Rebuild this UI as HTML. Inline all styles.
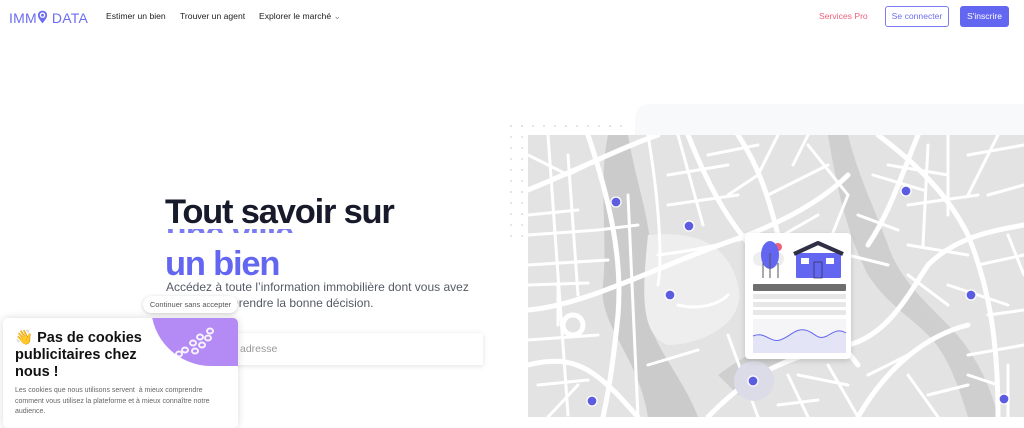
<!DOCTYPE html>
<html><head><meta charset="utf-8"><style>
*{margin:0;padding:0;box-sizing:border-box}
body{width:1024px;height:417px;overflow:hidden;background:#fff;font-family:"Liberation Sans",sans-serif;position:relative}
.abs{position:absolute}
.nav a{position:absolute;top:11px;font-size:8.6px;color:#222;white-space:nowrap}
</style></head><body>
<div class="abs" style="left:9px;top:7px;font-size:14px;color:#6c6cf0;letter-spacing:0.2px">IMM<span style="display:inline-block;width:11px;height:13px;position:relative;top:2px"><svg width="11" height="16" viewBox="0 0 12 16"><path d="M6 15 C3 11 1 9 1 6 A5 5 0 0 1 11 6 C11 9 9 11 6 15Z" fill="#6c6cf0"/><circle cx="6" cy="6" r="3" fill="#fff"/><circle cx="6" cy="6" r="1.6" fill="#6c6cf0"/></svg></span> DATA</div>
<div class="nav">
<a style="left:106px">Estimer un bien</a>
<a style="left:180px">Trouver un agent</a>
<a style="left:259px">Explorer le marché <span style="color:#888;font-size:9px">&#8964;</span></a>
<a style="left:819px;color:#f0607a">Services Pro</a>
</div>
<div class="abs" style="left:885px;top:6px;width:64px;height:21px;border:1px solid #7b7cf2;border-radius:3px;color:#6c6cf0;font-size:8.6px;text-align:center;line-height:19px">Se connecter</div>
<div class="abs" style="left:960px;top:6px;width:49px;height:21px;background:#6366f1;border-radius:3px;color:#fff;font-size:8.6px;text-align:center;line-height:21px">S'inscrire</div>

<div class="abs" style="left:635px;top:104px;width:389px;height:40px;background:#f8f9fb;border-radius:14px 0 0 0"></div>
<svg class="abs" style="left:508px;top:123px" width="120" height="120"><defs><pattern id="d" width="11" height="11" patternUnits="userSpaceOnUse"><circle cx="3" cy="3" r="1" fill="#dcdde3"/></pattern></defs><rect width="120" height="12" fill="url(#d)"/><rect width="20" height="120" fill="url(#d)"/></svg>
<svg class="abs" style="left:528px;top:135px" width="496" height="282" viewBox="0 0 496 282">
<rect width="496" height="282" fill="#e3e3e3"/>
<path d="M80 0 C70 50 80 100 75 150 C70 190 110 220 120 282 L170 282 C150 230 110 200 120 150 C130 100 110 60 100 0Z" fill="#cbcbcb"/>
<path d="M300 0 C310 60 320 100 340 140 C360 170 380 180 400 200 C420 220 430 250 440 282 L470 282 C460 240 440 210 420 190 C390 160 370 140 360 110 C345 70 330 40 320 0Z" fill="#cfcfcf"/>
<path d="M190 240 C230 210 260 200 300 190 L310 215 C270 220 240 235 210 260Z" fill="#cfcfcf"/>
<path d="M120 100 C170 95 200 110 210 150 C220 190 170 210 140 210 C110 200 115 150 120 100Z" fill="#eeeeee"/>
<g fill="none" stroke="#fff" stroke-linecap="round">
<g stroke-width="5">
<path d="M0 55 C60 30 100 10 130 0"/><path d="M0 175 C60 170 130 130 220 100 C270 80 300 60 320 40"/>
<path d="M60 0 C80 60 95 120 90 180 C85 230 80 260 75 282"/><path d="M160 0 C180 50 200 90 240 130 C270 160 300 190 330 230"/>
<path d="M0 230 C40 220 60 230 90 260 L110 282"/><path d="M180 282 C220 240 260 220 320 210 C360 200 380 160 400 130 C430 100 470 95 496 90"/>
<path d="M350 0 C390 30 420 60 440 100 C460 150 470 200 470 282"/><path d="M330 282 C360 230 400 200 440 190"/>
<path d="M210 0 C230 30 240 60 250 100"/><path d="M390 0 C370 50 360 80 340 110"/>
</g>
<g stroke-width="3">
<path d="M20 0 L40 280"/><path d="M120 0 C130 60 135 120 130 150"/><path d="M250 0 L230 40 L200 60"/><path d="M280 10 L320 60 L300 110"/>
<path d="M0 100 L70 95 L110 90"/><path d="M0 130 L80 125"/><path d="M0 205 L70 200"/><path d="M10 250 L60 245"/>
<path d="M140 40 L200 30"/><path d="M140 70 L210 60"/><path d="M130 120 C170 115 190 110 230 100"/><path d="M240 60 L300 30"/>
<path d="M260 150 L320 120 L360 130"/><path d="M360 30 L420 40"/><path d="M380 70 L450 60"/><path d="M380 110 L440 120"/>
<path d="M420 0 L420 80"/><path d="M450 130 L496 120"/><path d="M420 150 L480 170"/><path d="M440 220 L496 210"/>
<path d="M200 200 L230 282"/><path d="M260 240 L280 282"/><path d="M300 230 L330 282"/><path d="M100 60 L110 282"/>
<path d="M0 20 L40 40 L60 30"/><path d="M470 0 L440 60"/><path d="M480 100 L496 140"/><path d="M380 240 L410 282"/>
<path d="M150 170 C170 175 190 170 200 160"/><path d="M30 150 L30 190"/><path d="M440 240 L470 250"/>
<path d="M0 80 L50 75"/><path d="M40 20 L50 160"/><path d="M0 150 L60 148"/><path d="M50 250 L20 282"/><path d="M120 230 L170 215"/>
<path d="M180 20 L230 10"/><path d="M150 0 L175 90"/><path d="M255 100 L290 80"/><path d="M280 0 L265 30"/>
<path d="M330 80 L370 95"/><path d="M345 40 L395 55"/><path d="M400 10 L395 110"/><path d="M440 20 L496 10"/><path d="M460 60 L496 50"/>
<path d="M380 140 L420 170"/><path d="M300 150 L290 200"/><path d="M340 240 L380 220"/><path d="M400 260 L440 250"/><path d="M460 180 L496 175"/>
<path d="M270 240 L320 250"/><path d="M250 270 L290 265"/><path d="M480 230 L480 282"/>
</g>
</g>
<circle cx="45" cy="190" r="10" fill="none" stroke="#fff" stroke-width="5"/>
<circle cx="226" cy="246" r="20" fill="#dcdce8"/>
<g fill="#5b5ce0" stroke="#fff" stroke-width="1.3"><circle cx="88" cy="67" r="5"/><circle cx="161" cy="91" r="5"/><circle cx="142" cy="160" r="5"/><circle cx="378" cy="56" r="5"/><circle cx="443" cy="160" r="5"/><circle cx="225" cy="246" r="5"/><circle cx="64" cy="266" r="5"/><circle cx="476" cy="264" r="5"/></g>
</svg>
<div class="abs" style="left:745px;top:233px;width:106px;height:126px;background:#fff;border-radius:4px;box-shadow:0 2px 6px rgba(0,0,0,.15)">
<svg width="106" height="126" viewBox="0 0 106 126">
<circle cx="15" cy="26" r="7" fill="#eee"/><circle cx="32" cy="26" r="7" fill="#eee"/><circle cx="33" cy="14" r="4" fill="#f0607a"/>
<ellipse cx="25" cy="22" rx="9" ry="14" fill="#6366f1"/><path d="M25 20 V45 M18 30 V45 M33 30 V45" stroke="#555" stroke-width="1"/>
<rect x="51" y="20" width="45" height="25" rx="1" fill="#6366f1"/><path d="M49 21 L73 10 L98 21" stroke="#2f2f45" stroke-width="4" fill="none" stroke-linejoin="round"/>
<rect x="56" y="25" width="8" height="6" fill="#fff"/><rect x="81" y="25" width="8" height="6" fill="#fff"/><rect x="69" y="29" width="8" height="16" fill="none" stroke="#2f2f45" stroke-width="0.7"/>
<rect x="8" y="51" width="93" height="7" rx="1" fill="#6e6e6e"/><rect x="8" y="61" width="93" height="5" rx="1" fill="#e7e7e7"/><rect x="8" y="69" width="93" height="5" rx="1" fill="#e7e7e7"/><rect x="8" y="77" width="93" height="5" rx="1" fill="#e7e7e7"/>
<rect x="8" y="86" width="93" height="34" fill="#f5f5f7"/>
<path d="M8 103 C20 98 25 110 35 107 C45 104 50 95 60 97 C70 99 72 108 82 103 C90 98 94 96 101 100 V120 H8Z" fill="#e4e4f7"/>
<path d="M8 103 C20 98 25 110 35 107 C45 104 50 95 60 97 C70 99 72 108 82 103 C90 98 94 96 101 100" fill="none" stroke="#6366f1" stroke-width="1"/>
</svg></div>

<div class="abs" style="left:166px;top:229px;width:140px;height:4px;overflow:hidden"><div style="position:absolute;left:0;top:-12px;font-size:34px;font-weight:bold;color:#7b7cf2;line-height:1;letter-spacing:-1px;white-space:nowrap">une ville</div></div>
<div class="abs" style="left:165px;top:192px;font-size:34.5px;font-weight:bold;color:#161a2b;letter-spacing:-1.2px;line-height:40px;white-space:nowrap">Tout savoir sur</div>
<div class="abs" style="left:165px;top:244px;font-size:34.5px;font-weight:bold;color:#6366f1;letter-spacing:-1.2px;line-height:40px">un bien</div>
<div class="abs" style="left:166px;top:280px;font-size:12px;color:#555a66;line-height:15.5px;width:320px">Accédez à toute l’information immobilière dont vous avez besoin pour prendre la bonne décision.</div>
<div class="abs" style="left:224px;top:333px;width:259px;height:32px;background:#fff;box-shadow:0 1px 5px rgba(0,0,0,.12);font-size:10.5px;color:#999;padding:10px 16px">adresse</div>

<div class="abs" style="left:3px;top:318px;width:235px;height:110px;background:#fff;border-radius:5px;box-shadow:0 0 8px rgba(0,0,0,.15);overflow:hidden">
<div class="abs" style="left:148px;top:-12px;width:115px;height:60px;background:#b48af5;border-radius:0 0 20px 70px"></div>
<svg class="abs" style="left:172px;top:5px" width="45" height="40"><g fill="none" stroke="#fff" stroke-width="2" opacity=".9"><ellipse cx="35" cy="8" rx="3" ry="2.5"/><ellipse cx="33" cy="15" rx="3" ry="2.5"/><ellipse cx="25" cy="14" rx="3" ry="2.5"/><ellipse cx="18" cy="20" rx="3" ry="2.5"/><ellipse cx="27" cy="22" rx="3" ry="2.5"/><ellipse cx="10" cy="27" rx="3" ry="2.5"/><ellipse cx="20" cy="28" rx="3" ry="2.5"/><ellipse cx="4" cy="31" rx="3" ry="2.5"/></g></svg>
<div class="abs" style="left:12px;top:12px;font-size:14.5px;font-weight:bold;color:#111;line-height:17px;width:140px">👋 Pas de cookies publicitaires chez nous !</div>
<div class="abs" style="left:12px;top:68px;font-size:7px;color:#666;line-height:10.5px;width:215px">Les cookies que nous utilisons servent&nbsp; à mieux comprendre comment vous utilisez la plateforme et à mieux connaître notre audience.</div>
</div>
<div class="abs" style="left:143px;top:296px;width:95px;height:17px;background:#fff;border-radius:9px;box-shadow:0 1px 4px rgba(0,0,0,.2);font-size:7.5px;color:#555;text-align:center;line-height:17px">Continuer sans accepter</div>
</body></html>
